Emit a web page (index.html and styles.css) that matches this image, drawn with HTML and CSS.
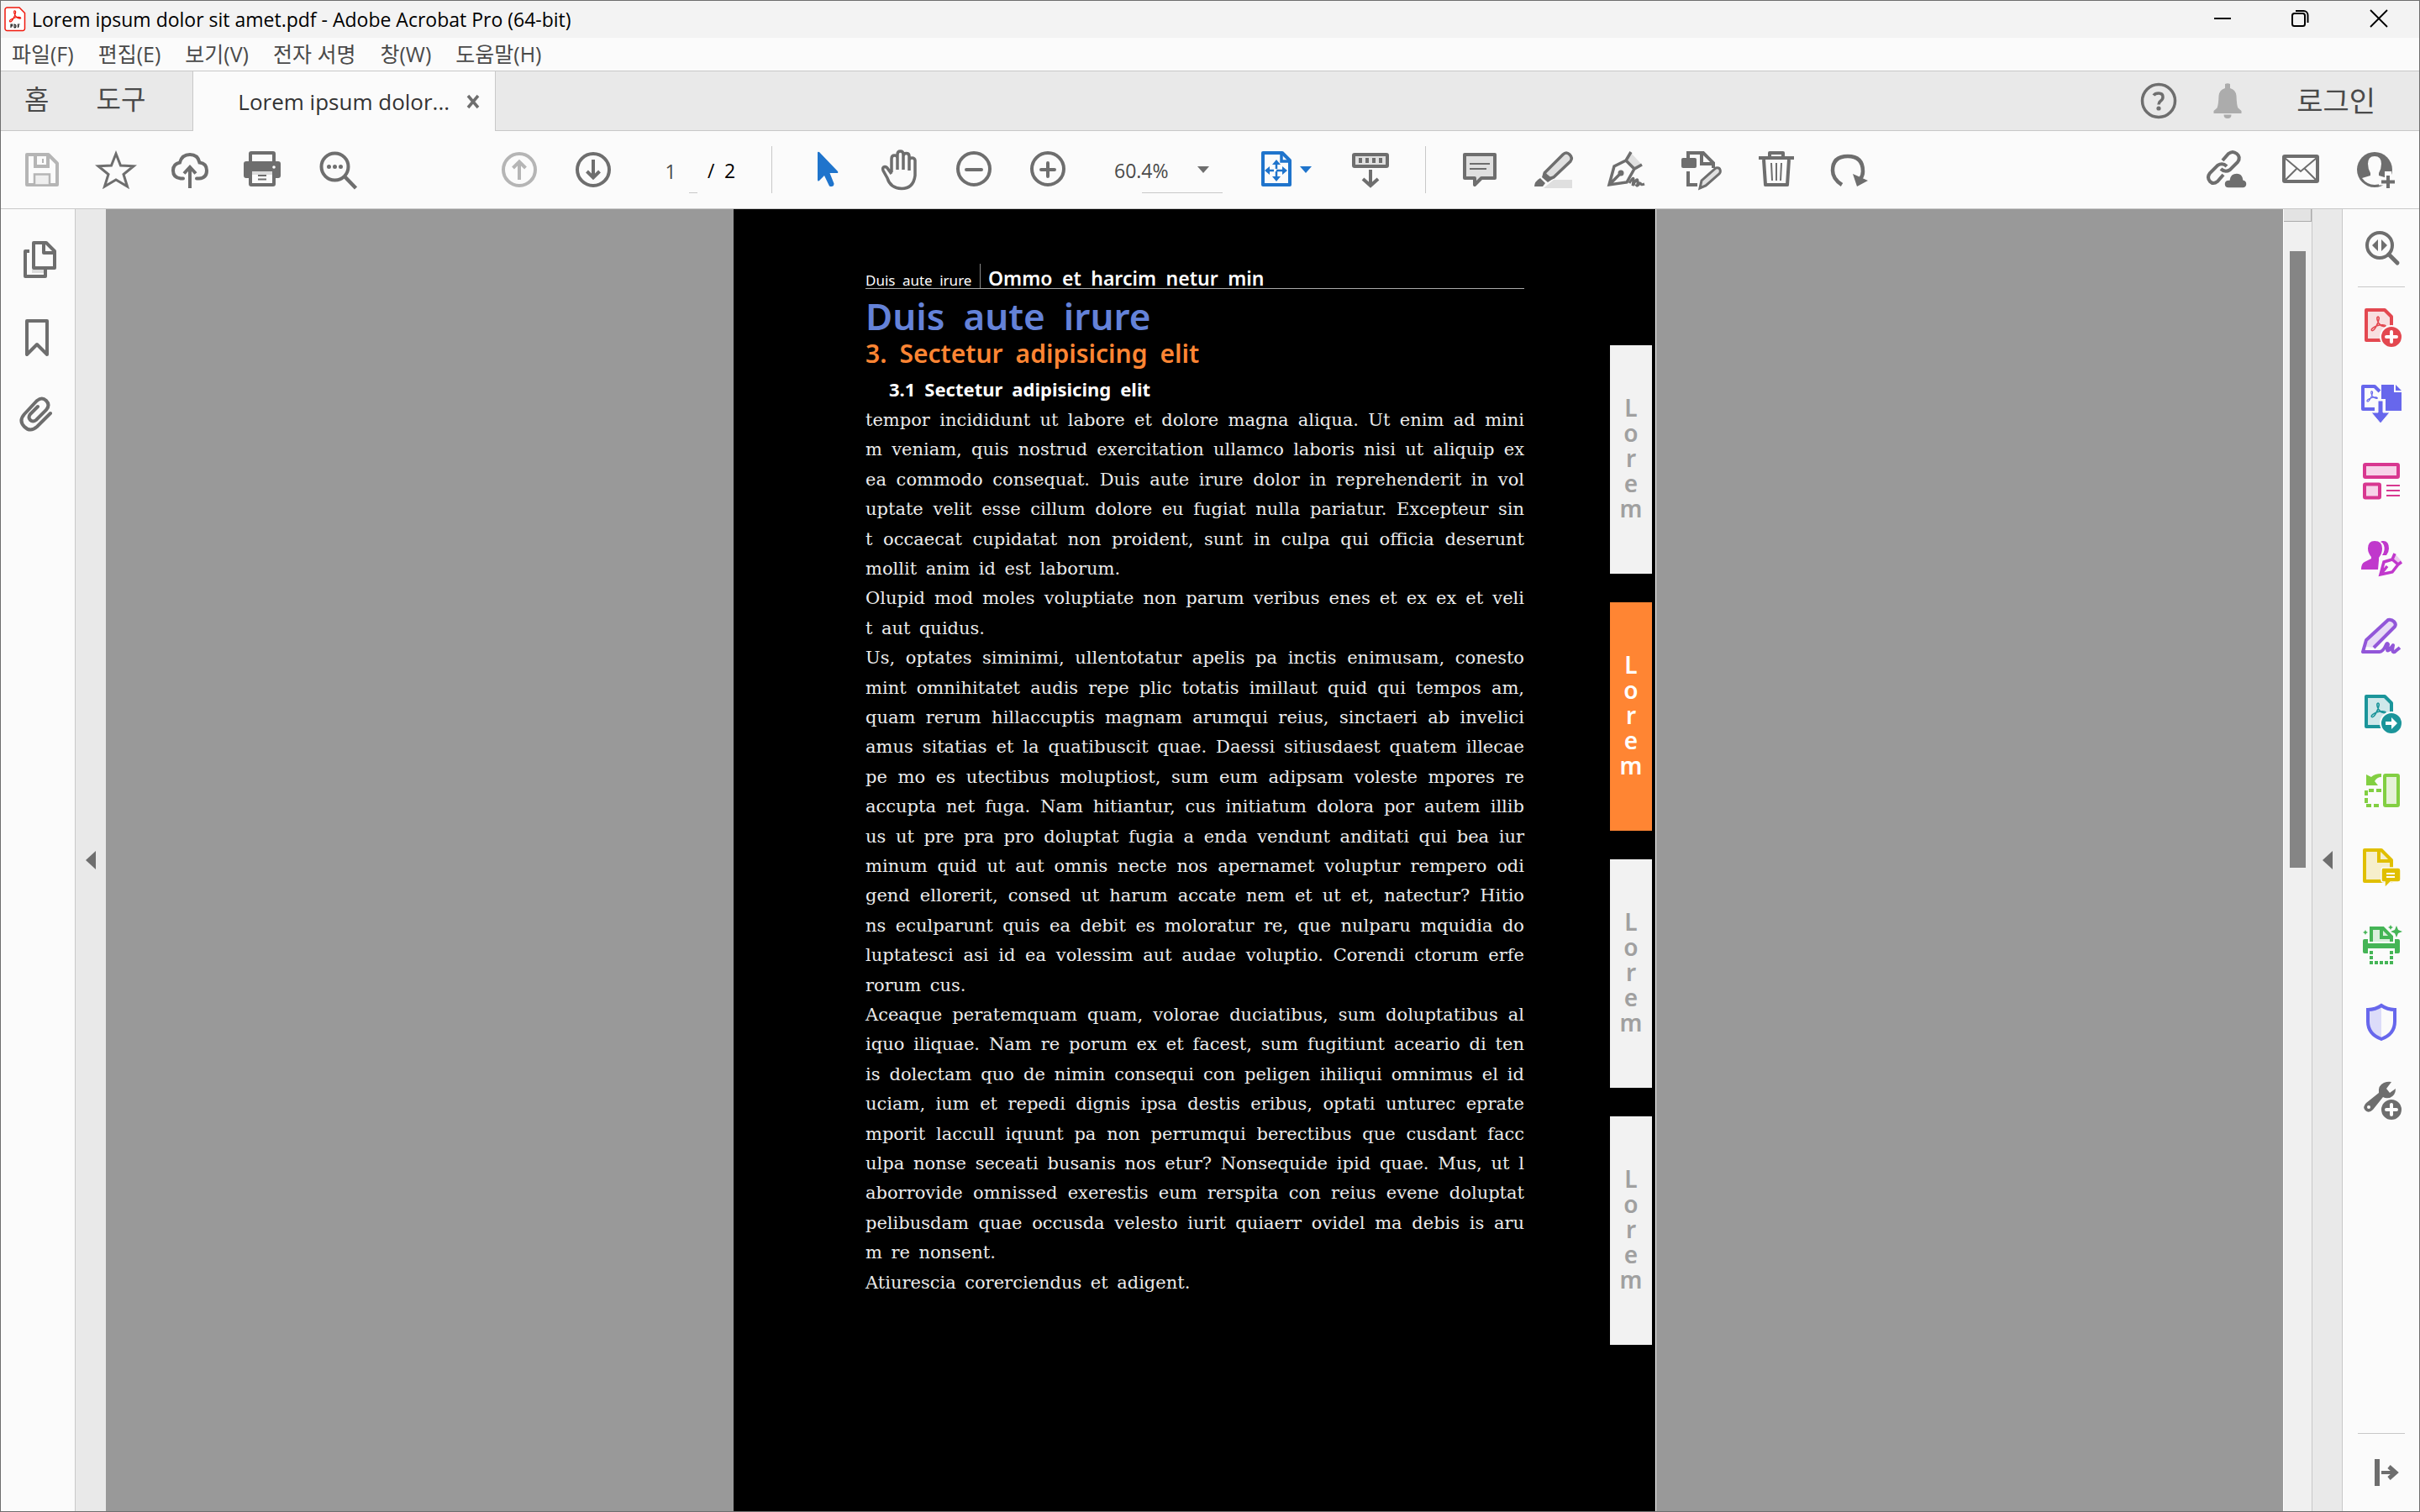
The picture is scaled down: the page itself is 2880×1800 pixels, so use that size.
FILE: index.html
```html
<!DOCTYPE html>
<html lang="ko">
<head>
<meta charset="utf-8">
<title>Lorem ipsum dolor sit amet.pdf - Adobe Acrobat Pro (64-bit)</title>
<link rel="stylesheet" href="styles.css">
</head>
<body>
<svg class="defs" aria-hidden="true">
  <symbol id="acrobat" viewBox="0 0 18 18"><path d="M1.5 16.5c-1.500-2 3-4 6-5.300 3.500-1.200 9-1.600 9.500 0 .4 1.800-4.500.6-6.500-1.600C8.500 7.600 7 3.500 7.600 1.800 8.200.4 10 1 9.700 3.200 9.200 7.500 4 18.500 1.500 16.500z" fill="none" stroke="currentColor" stroke-width="1.500"/></symbol>
</svg>
<div class="window">
  <header class="titlebar">
    <svg class="app-icon" viewBox="0 0 26 30" fill="none" stroke="#f0180c" stroke-width="1.500"><path d="M3 1h15l6.500 6.500V26a2.500 2.500 0 0 1-2.500 2.500H3.500A2.500 2.500 0 0 1 1 26V3.500A2.500 2.500 0 0 1 3.500 1z" fill="#fff"/><g color="#f0180c"><use href="#acrobat" x="5" y="4" width="16" height="15"/></g><path d="M8 25v-4h1.500v2H8m4 2v-4q2 0 2 2t-2 2m4.500 0v-4h2m-2 2h1.500" stroke="#222" stroke-width="1.200"/></svg>
    <h1 class="window-title">Lorem ipsum dolor sit amet.pdf - Adobe Acrobat Pro (64-bit)</h1>
    <div class="window-controls">
      <button aria-label="Minimize"><svg viewBox="0 0 22 22"><path d="M1 10h20" stroke="#000" stroke-width="2"/></svg></button>
      <button aria-label="Restore"><svg viewBox="0 0 22 22" fill="none" stroke="#000" stroke-width="2"><rect x="2" y="4" width="15" height="15" rx="2.500"/><path d="M6 1h9.500a5 5 0 0 1 5 5V15"/></svg></button>
      <button aria-label="Close"><svg viewBox="0 0 22 22"><path d="M1 0l20 20M21 0L1 20" stroke="#000" stroke-width="1.800"/></svg></button>
    </div>
  </header>
  <nav class="menubar">
    <button>파일(F)</button><button>편집(E)</button><button>보기(V)</button><button>전자 서명</button><button>창(W)</button><button>도움말(H)</button>
  </nav>
  <div class="tabbar">
    <button class="nav-tab">홈</button>
    <button class="nav-tab tools">도구</button>
    <div class="doc-tab"><span>Lorem ipsum dolor...</span>
      <button aria-label="Close tab"><svg viewBox="0 0 16 16"><path d="M2 1l12 14M14 1L2 15" stroke="#6e6e6e" stroke-width="3.500"/></svg></button>
    </div>
    <div class="account">
      <button aria-label="Help"><svg viewBox="0 0 48 48" fill="none" stroke="#6e6e6e"><circle cx="24" cy="24" r="19.500" stroke-width="3.500"/><path d="M18 17.500q1.500-2.500 6-2.500 5 0 5 4.500 0 3-3 5-2 1.500-2 4" stroke-width="3.500"/><circle cx="24" cy="33" r="2.600" fill="#6e6e6e" stroke="none"/></svg></button>
      <button aria-label="Notifications"><svg viewBox="0 0 48 48" fill="#acacac"><path d="M21 4q3-1.500 6 0v5q6.500 1.500 7.500 9 .4 12 2 14.500l4 3.500v3h-33v-3l4-3.500q1.600-3 2-14.500 1-7.500 7.500-9zM19.500 40.500h9q0 4.500-4.500 4.500t-4.500-4.500z"/></svg></button>
      <a class="login" href="#login">로그인</a>
    </div>
  </div>
  <div class="toolbar" role="toolbar">
    <div class="group files">
      <button aria-label="Save"><svg viewBox="0 0 48 48" fill="none" stroke="#b5b5b5" stroke-width="4"><path d="M6 6h25.500L42 16.500V42H6z" stroke-linejoin="round"/><path d="M16 6v14h15V6"/><path d="M25 11v5" stroke-width="2"/><rect x="15" y="29.500" width="18" height="13" fill="#efefef" stroke-width="2.500"/></svg></button>
      <button aria-label="Star"><svg viewBox="0 0 48 48" fill="none" stroke="#6e6e6e" stroke-width="3"><path d="M24 5l5.500 14L45 19.700 33 29.500 37.500 44 24 36 10.500 44 15 29.500 3 19.700 18.500 19z"/></svg></button>
      <button aria-label="Upload"><svg viewBox="0 0 48 48" fill="none" stroke="#6e6e6e" stroke-width="4"><path d="M16 34.500h-3q-9-1-9-9.500 0-8 8-9.500Q14.500 6 24 6t11.500 9.500q8.500 1 8.500 9.500 0 9-9 9.500h-3" stroke-linecap="round"/><path d="M24 46V23M17 28.500l7-7.500 7 7.500"/></svg></button>
      <button aria-label="Print"><svg viewBox="0 0 48 48"><path d="M9 2h26q3 0 3 3v9h3q3 0 3 3v14q0 3-3 3h-3v7q0 3-3 3H9q-3 0-3-3v-7H3q-3 0-3-3V17q0-3 3-3h3V5q0-3 3-3z" fill="#6e6e6e"/><path d="M10 6h24v8H10zM10 26h24v14H10z" fill="#fbfbfb"/><path d="M10 26h24v4H10z" fill="#dcdcdc"/><path d="M17 31h10M17 35.500h10" stroke="#6e6e6e" stroke-width="2"/><circle cx="36" cy="21" r="1.800" fill="#fff"/></svg></button>
      <button aria-label="Find"><svg viewBox="0 0 48 48" fill="none" stroke="#6e6e6e"><circle cx="20.500" cy="20.500" r="16" stroke-width="4"/><path d="M32 32l13.500 14" stroke-width="4.500"/><path d="M13.500 20.500h0M20.500 20.500h0M27.500 20.500h0" stroke-width="5" stroke-linecap="round"/></svg></button>
    </div>
    <div class="group pages">
      <button aria-label="Previous page"><svg viewBox="0 0 48 48" fill="none" stroke="#b5b5b5" stroke-width="4"><circle cx="24" cy="24" r="19"/><path d="M24 36V15M16.500 22l7.500-7.500 7.500 7.500"/></svg></button>
      <button aria-label="Next page"><svg viewBox="0 0 48 48" fill="none" stroke="#6e6e6e" stroke-width="4"><circle cx="24" cy="24" r="19"/><path d="M24 12v21M16.500 26l7.500 7.500 7.500-7.500"/></svg></button>
      <label class="page-field"><input value="1" aria-label="Page"><i></i></label>
      <span class="page-total">/&ensp;2</span>
    </div>
    <div class="group view">
      <button aria-label="Select"><svg viewBox="0 0 48 48"><path d="M14 4q0-2 2-1l22 23q1 2-1 2h-8.500l5 12.500q0 4-4 3.500-1.500 0-2-1.500L22 31l-6 6q-2 1.500-2-1z" fill="#1f74cc"/></svg></button>
      <button aria-label="Hand"><svg viewBox="0 0 48 48" fill="none" stroke="#6e6e6e" stroke-width="3.500"><path d="M14 27V11q0-4 3.500-4t3.500 3v14V6q0-4 3.500-4T28 6v18V8q0-3.500 3.500-3.500T35 8v17V13q0-3 3.300-3t3.700 3v18q-2 15.500-16 15.500-13.500-.5-17-12.500L4 25q-1.500-4 2-4.500 2.500 0 4 3l4 5.500"/></svg></button>
      <button aria-label="Zoom out"><svg viewBox="0 0 48 48" fill="none" stroke="#6e6e6e" stroke-width="4"><circle cx="24" cy="23" r="19"/><path d="M15 24h18" stroke-linecap="round"/></svg></button>
      <button aria-label="Zoom in"><svg viewBox="0 0 48 48" fill="none" stroke="#6e6e6e" stroke-width="4"><circle cx="24" cy="23" r="19"/><path d="M16 24h16M24 16v16" stroke-linecap="round"/></svg></button>
      <label class="zoom-field"><select aria-label="Zoom"><option>60.4%</option></select><svg viewBox="0 0 14 8"><path d="M0 0h14L7 8z" fill="#6e6e6e"/></svg></label>
      <button class="fit" aria-label="Fit page"><svg viewBox="0 0 48 48" fill="none" stroke="#1f74cc"><path d="M8 4h23l9 9v29H8z" stroke-width="4" stroke-linejoin="round"/><path d="M30 4v10h10" stroke-width="3.500"/><path d="M24 15v22M13 25h22" stroke-width="2.500" stroke-dasharray="8 3"/><path d="M24 12l5 6H19zM24 38l5-6H19zM10 25l6-5v10zM37 25l-6-5v10z" fill="#1f74cc" stroke="none"/></svg><svg class="caret" viewBox="0 0 14 8"><path d="M0 0h14L7 8z" fill="#1f74cc"/></svg></button>
      <button aria-label="Read mode"><svg viewBox="0 0 48 48" fill="none" stroke="#6e6e6e" stroke-width="4"><rect x="4" y="6" width="40" height="14" rx="1" fill="#e0e0e0"/><path d="M12 10v6M20 10v6M28 10v6M36 10v6M24 24v18M15 35l9 8 9-8"/></svg></button>
    </div>
    <div class="group comment">
      <button aria-label="Comment"><svg viewBox="0 0 48 48"><path d="M6 6h36v28H26l-8 8v-8H6z" fill="#e0e0e0" stroke="#6e6e6e" stroke-width="4" stroke-linejoin="round"/><path d="M12 17h24M12 23h20" stroke="#6e6e6e" stroke-width="2"/></svg></button>
      <button aria-label="Highlight"><svg viewBox="0 0 48 48"><path d="M12 46l12-10h22v10z" fill="#dfdfdf"/><path d="M14 27L35 6q4-4 8 0t1 8L24 33l-6 2-5-5z" fill="#e0e0e0" stroke="#6e6e6e" stroke-width="3.500"/><path d="M12 26l11 9-6 4-7-6zM8 34l6 6-3 4H1q0-6 7-10z" fill="#6e6e6e"/></svg></button>
      <button aria-label="Sign"><svg viewBox="0 0 48 48" fill="none" stroke="#6e6e6e" stroke-width="3.500"><path d="M27 3l14 15-7 5L23 12z" fill="#e0e0e0" stroke="none"/><path d="M28 3l-6 10 10 10 9-5M22 13L8 20 2 42l21-3 9-16M3 41l12-12" /><circle cx="16" cy="28" r="3.500" fill="#6e6e6e" stroke="none"/><path d="M26 40q5-8 5-5t-1 8q6-11 6-5t-1 5q2 0 4-4 0 4 5 2" stroke-width="3"/></svg></button>
      <button aria-label="Edit PDF"><svg viewBox="0 0 48 48" fill="none" stroke="#6e6e6e" stroke-width="4"><path d="M8 12V4h18l12 12v6M24 4v13h14M8 26v16h11"/><rect x="0" y="10" width="18" height="12" rx="2" fill="#6e6e6e" stroke="none"/><path d="M22 46l2-9 17-15q4-1 5 2t-1 5L29 43z" fill="#e0e0e0" stroke-width="3"/></svg></button>
      <button aria-label="Delete"><svg viewBox="0 0 48 48" fill="none" stroke="#6e6e6e" stroke-width="4"><path d="M4 10h42M17 9V4h16v5M10 12l2 30h26l2-30" stroke-linejoin="round"/><path d="M19 16l1 21M25 16v21M31 16l-1 21" stroke-width="2"/></svg></button>
      <button aria-label="Rotate"><svg viewBox="0 0 48 48"><path d="M15 42Q4 35 4 25 4 8 22 8t18 18q0 5-3 9" fill="none" stroke="#6e6e6e" stroke-width="4.500"/><path d="M28 29l18 8-13 7z" fill="#6e6e6e"/></svg></button>
    </div>
    <div class="group share">
      <button aria-label="Share link"><svg viewBox="0 0 48 48" fill="none" stroke="#6e6e6e" stroke-width="4"><path d="M19 13l7-8q5-4 10 0t1 10l-9 9q-6 4-11-1M20 30l-7 8q-5 4-9 0-4-5 0-10l9-9q6-4 11 1" /><path d="M26 46q-5 0-5-5t6-5q1-8 9-8 7 0 8 8 4 1 4 5t-4 5z" fill="#6e6e6e" stroke="#fbfbfb" stroke-width="1.500"/></svg></button>
      <button aria-label="Email"><svg viewBox="0 0 48 48" fill="none" stroke="#6e6e6e"><rect x="4" y="8" width="40" height="30" rx="1" stroke-width="4"/><path d="M5 10l19 16L43 10M5 37l14-14M43 37L29 23" stroke-width="2"/></svg></button>
      <button aria-label="Add person"><svg viewBox="0 0 48 48"><circle cx="24" cy="24" r="21" fill="#6e6e6e"/><path d="M24 8q8 0 8 9 0 6-3 11v3l10 3q-6 8-15 8T9 34l10-3v-3q-3-5-3-11 0-9 8-9z" fill="#fbfbfb"/><path d="M40 26v22M29 38.500h19" stroke="#fbfbfb" stroke-width="8"/><path d="M40 31v15M32 38.500h16" stroke="#6e6e6e" stroke-width="4"/></svg></button>
    </div>
  </div>
  <main class="workspace">
    <nav class="left-panel">
      <button aria-label="Thumbnails"><svg viewBox="0 0 48 48" fill="none" stroke="#6e6e6e" stroke-width="4"><path d="M17 38h14" stroke="#dcdcdc"/><path d="M14 14H9v30h24v-9M19 4h15l10 10v20H19zM31 4v12h13" stroke-linejoin="round"/></svg></button>
      <button aria-label="Bookmarks"><svg viewBox="0 0 48 48" fill="none" stroke="#6e6e6e" stroke-width="4"><path d="M11 5h24v40L23 33 11 45z" stroke-linejoin="round"/></svg></button>
      <button aria-label="Attachments"><svg viewBox="0 0 48 48" fill="none" stroke="#6e6e6e" stroke-width="4" stroke-linecap="round"><path d="M39 23L23 39q-8 7-15 0t0-15L23 8q6-5 11 0t0 11L22 31q-4 3-7 0t0-7l9-9"/></svg></button>
    </nav>
    <button class="collapse" aria-label="Show left panel"><svg viewBox="0 0 12 22"><path d="M12 0v22L0 11z" fill="#6e6e6e"/></svg></button>
    <section class="canvas">
      <article class="page">
        <div class="sheet">
          <div class="running-head"><span class="chapter">Duis&ensp;aute&ensp;irure</span><strong>Ommo&ensp;et&ensp;harcim&ensp;netur&ensp;min</strong></div>
          <h2>Duis&ensp;aute&ensp;irure</h2>
          <h3>3.&ensp;Sectetur&ensp;adipisicing&ensp;elit</h3>
          <h4>3.1&ensp;Sectetur&ensp;adipisicing&ensp;elit</h4>
          <div class="copy">
            <p><span>tempor incididunt ut labore et dolore magna aliqua. Ut enim ad mini</span><span>m veniam, quis nostrud exercitation ullamco laboris nisi ut aliquip ex</span><span>ea commodo consequat. Duis aute irure dolor in reprehenderit in vol</span><span>uptate velit esse cillum dolore eu fugiat nulla pariatur. Excepteur sin</span><span>t occaecat cupidatat non proident, sunt in culpa qui officia deserunt</span><span class="last">mollit&ensp;anim&ensp;id&ensp;est&ensp;laborum.</span></p>
            <p><span>Olupid mod moles voluptiate non parum veribus enes et ex ex et veli</span><span class="last">t&ensp;aut&ensp;quidus.</span></p>
            <p><span>Us, optates siminimi, ullentotatur apelis pa inctis enimusam, conesto</span><span>mint omnihitatet audis repe plic totatis imillaut quid qui tempos am,</span><span>quam rerum hillaccuptis magnam arumqui reius, sinctaeri ab invelici</span><span>amus sitatias et la quatibuscit quae. Daessi sitiusdaest quatem illecae</span><span>pe mo es utectibus moluptiost, sum eum adipsam voleste mpores re</span><span>accupta net fuga. Nam hitiantur, cus initiatum dolora por autem illib</span><span>us ut pre pra pro doluptat fugia a enda vendunt anditati qui bea iur</span><span>minum quid ut aut omnis necte nos apernamet voluptur rempero odi</span><span>gend ellorerit, consed ut harum accate nem et ut et, natectur? Hitio</span><span>ns eculparunt quis ea debit es moloratur re, que nulparu mquidia do</span><span>luptatesci asi id ea volessim aut audae voluptio. Corendi ctorum erfe</span><span class="last">rorum&ensp;cus.</span></p>
            <p><span>Aceaque peratemquam quam, volorae duciatibus, sum doluptatibus al</span><span>iquo iliquae. Nam re porum ex et facest, sum fugitiunt aceario di ten</span><span>is dolectam quo de nimin consequi con peligen ihiliqui omnimus el id</span><span>uciam, ium et repedi dignis ipsa destis eribus, optati unturec eprate</span><span>mporit laccull iquunt pa non perrumqui berectibus que cusdant facc</span><span>ulpa nonse seceati busanis nos etur? Nonsequide ipid quae. Mus, ut l</span><span>aborrovide omnissed exerestis eum rerspita con reius evene doluptat</span><span>pelibusdam quae occusda velesto iurit quiaerr ovidel ma debis is aru</span><span class="last">m&ensp;re&ensp;nonsent.</span></p>
            <p><span class="last">Atiurescia&ensp;corerciendus&ensp;et&ensp;adigent.</span></p>
          </div>
        </div>
        <nav class="thumb-index"><a href="#s1"><span>Lorem</span></a><a class="current" href="#s2"><span>Lorem</span></a><a href="#s3"><span>Lorem</span></a><a href="#s4"><span>Lorem</span></a></nav>
      </article>
    </section>
    <div class="scrollbar"><div class="split"></div><div class="thumb"></div></div>
    <button class="collapse right" aria-label="Hide tools panel"><svg viewBox="0 0 12 22"><path d="M12 0v22L0 11z" fill="#6e6e6e"/></svg></button>
    <nav class="tools-panel">
      <button aria-label="Search tools"><svg viewBox="0 0 48 48"><circle cx="22" cy="21" r="15" fill="none" stroke="#6e6e6e" stroke-width="4"/><path d="M33 32l10 10" stroke="#6e6e6e" stroke-width="5" stroke-linecap="round"/><path d="M20 14v14l-7-7zM24 14v14l7-7z" fill="#6e6e6e"/></svg></button>
      <hr>
      <button aria-label="Create PDF"><svg viewBox="0 0 48 48" color="#e34850"><path d="M6 4h22l8 8v28H6z" fill="#f8dfe0" stroke="#e34850" stroke-width="4" stroke-linejoin="round"/><use href="#acrobat" x="11" y="11" width="19" height="19"/><circle cx="36" cy="36" r="13" fill="#e34850" stroke="#fbfbfb" stroke-width="2"/><path d="M36 30v12M30 36h12" stroke="#fff" stroke-width="4" stroke-linecap="round"/></svg></button>
      <button aria-label="Export PDF"><svg viewBox="0 0 48 48" color="#6767ec"><path d="M24 1h15v9h9v22H29V18h-5zM41 1l7 7h-7z" fill="#6767ec"/><path d="M16 30H2V3h14l6 6" fill="none" stroke="#6767ec" stroke-width="4" stroke-linejoin="round"/><use href="#acrobat" x="6" y="8" width="14" height="14"/><path d="M20 20h6v14h8L23 47 12 34h8z" fill="#6767ec" stroke="#fbfbfb" stroke-width="1"/></svg></button>
      <button aria-label="Organize pages"><svg viewBox="0 0 48 48" fill="#f7d3e9" stroke="#d83790"><g stroke-width="4"><rect x="4" y="4" width="40" height="15" rx="1"/><rect x="4" y="27.500" width="18" height="16" rx="1"/></g><path d="M30 29h16M30 35h16M30 41h16" stroke-width="2"/></svg></button>
      <button aria-label="Request signatures"><svg viewBox="0 0 48 48" fill="#c038cc"><path d="M16 3q9 0 9 9 0 6-4 11v3l-1 11H0q0-7 4-9l8-4v-2q-4-5-4-10Q8 3 16 3zM25 3q8-1 8 9 0 4-3 8h-5q4-6 2-12-1-3-4-4z"/><path d="M40 18l-3 7-10 3-4 15 14-3 7-9 4-3M37 25l7 6M23 43l8-10" fill="none" stroke="#c038cc" stroke-width="3.500"/><path d="M40 18l8 9-4 3-7-6z" opacity=".25"/></svg></button>
      <button aria-label="Fill and sign"><svg viewBox="0 0 48 48" fill="none" stroke="#9256d9" stroke-width="4"><path d="M6 29L31 5q3-3 7 1t1 7L15 38l-9-1z" fill="#e8dcf6" stroke="none"/><path d="M15 38l25-25q2-3-1-6t-7-2L6 29 2 43h20q4 0 8-9 1-2 2 0l-1 6q0 3 3 0l4-5-1 6q1 4 4 1l5-4" stroke-linejoin="round"/></svg></button>
      <button aria-label="Share PDF"><svg viewBox="0 0 48 48" color="#1b959a"><path d="M6 4h22l8 8v28H6z" fill="#cfe8ea" stroke="#1b959a" stroke-width="4" stroke-linejoin="round"/><use href="#acrobat" x="11" y="11" width="19" height="19"/><circle cx="36" cy="36" r="13" fill="#1b959a" stroke="#fbfbfb" stroke-width="2"/><path d="M29 34h7v-5l7 7-7 7v-5h-7z" fill="#fff"/></svg></button>
      <button aria-label="Reorder"><svg viewBox="0 0 48 48" fill="none" stroke="#82cf42"><rect x="28" y="6" width="16" height="36" rx="1" fill="#e5f2d8" stroke-width="4"/><path d="M24 24H6v18h18" stroke-width="4" stroke-dasharray="6 3"/><path d="M24 4q-8 0-12 4L6 5v13h14l-4-5q3-5 8-5z" fill="#82cf42" stroke="none"/></svg></button>
      <button aria-label="Comment"><svg viewBox="0 0 48 48"><path d="M4 3h20l12 12v25H4z" fill="#f6efcb" stroke="#e0bf00" stroke-width="4" stroke-linejoin="round"/><path d="M21 3v13h15" fill="none" stroke="#e0bf00" stroke-width="4"/><path d="M26 24h18q3 0 3 3v11q0 3-3 3h-9l-7 7v-7h-2q-2 0-2-3V27q0-3 2-3z" fill="#e0bf00" stroke="#fbfbfb" stroke-width="1.500"/><path d="M30 31h10M30 35h10" stroke="#fff" stroke-width="2"/></svg></button>
      <button aria-label="Scan and OCR"><svg viewBox="0 0 48 48" fill="#45b556"><path d="M12 22V4h14l10 10v8z" fill="#daefdd" stroke="#45b556" stroke-width="4"/><path d="M24 4v11h12" fill="none" stroke="#45b556" stroke-width="4"/><path d="M8 20h32v10H8z" fill="#fbfbfb"/><path d="M4 17h4v5h32v-5h4q2 0 2 2v13q0 2-2 2h-4v-6H8v6H4q-2 0-2-2V19q0-2 2-2z"/><path d="M12 31v14h24V31" fill="none" stroke="#45b556" stroke-width="4" stroke-dasharray="4 2"/><path d="M42 1l2 5 5 2-5 2-2 5-2-5-5-2 5-2zM5 6l1 2 2 1-2 1-1 2-1-2-2-1 2-1zM35 0l1 2 2 1-2 1-1 2-1-2-2-1 2-1z"/></svg></button>
      <button aria-label="Protect"><svg viewBox="0 0 48 48"><path d="M24 4L8 9v14q0 15 16 21z" fill="#dcdcf9"/><path d="M24 4q-7 5-16 5v14q0 15 16 21 16-6 16-21V9q-9 0-16-5z" fill="none" stroke="#6767ec" stroke-width="4"/></svg></button>
      <button aria-label="More tools"><svg viewBox="0 0 48 48"><path d="M36 3l-6 8 4 5 7-5q0 8-7 11-5 1-8-1L14 36q-5 5-9 1t1-9l15-12q-1-9 6-12 5-2 9-1z" fill="#6e6e6e"/><circle cx="9" cy="33" r="2" fill="#fff"/><circle cx="36" cy="36" r="13" fill="#6e6e6e" stroke="#fbfbfb" stroke-width="2"/><path d="M36 30v12M30 36h12" stroke="#fff" stroke-width="4" stroke-linecap="round"/></svg></button>
      <hr class="bottom">
      <button aria-label="Expand panel"><svg viewBox="0 0 48 48" stroke="#6e6e6e" fill="none"><path d="M19 8v32" stroke-width="6"/><path d="M24 24h17" stroke-width="4"/><path d="M33 17l8 7-8 7" stroke-width="5"/></svg></button>
    </nav>
  </main>
</div>
</body>
</html>
```
FILE: styles.css
```css
* { box-sizing: border-box; }
body { margin: 0; font-family: "Open Sans", "Noto Sans CJK KR", sans-serif; color: #4a4a4a; }
button { margin: 0; padding: 0; border: 0; background: none; font: inherit; color: inherit; display: flex; align-items: center; justify-content: center; white-space: nowrap; }
svg { display: block; flex: none; overflow: visible; }
.defs { position: absolute; width: 0; height: 0; }
.window { min-height: 100vh; display: flex; flex-direction: column; border: 1px solid #6e6e6e; background: #fbfbfb; }

.titlebar { height: 44px; background: #f3f3f3; display: flex; align-items: center; gap: 7px; padding-left: 4px; }
.app-icon { width: 26px; height: 30px; }
.window-title { margin: 0; font-size: 23px; font-weight: 400; line-height: 32px; color: #000; flex: 1; }
.window-controls { display: flex; align-self: stretch; }
.window-controls button { width: 92px; }
.window-controls button:last-child { width: 96px; }
.window-controls svg { width: 22px; height: 22px; }

.menubar { height: 40px; display: flex; gap: 29px; padding: 0 0 2px 13px; border-bottom: 1px solid #c8c8c8; font-size: 25px; line-height: 32px; }

.tabbar { height: 71px; display: flex; background: #e9e9e9; }
.tabbar > * { border-bottom: 1px solid #c8c8c8; }
.nav-tab { font-size: 32px; line-height: 40px; padding: 0 27px 4px 28px; }
.nav-tab.tools { padding: 0 56px 4px 29px; }
.doc-tab { width: 361px; display: flex; align-items: center; gap: 20px; padding-left: 53px; font-size: 26px; color: #333; background: #fbfbfb; border: 1px solid #c8c8c8; border-width: 0 1px; white-space: nowrap; }
.doc-tab svg { width: 16px; height: 16px; }
.account { flex: 1; display: flex; justify-content: flex-end; align-items: center; gap: 34px; padding-right: 52px; }
.account svg { width: 48px; height: 48px; }
.login { margin-left: 24px; color: inherit; text-decoration: none; font-size: 34px; line-height: 48px; }

.toolbar { height: 93px; display: flex; align-items: center; border-bottom: 1px solid #c8c8c8; }
.group { display: flex; align-items: center; }
.group > button { width: 88px; height: 72px; }
.group svg { width: 48px; height: 48px; }
.files { padding-left: 5px; }
.pages { margin-left: 128px; font-size: 23px; }
.page-field { width: 80px; height: 56px; display: flex; flex-direction: column; align-items: flex-end; }
.page-field input { width: 100%; height: 55px; padding: 4px 16px 0 32px; border: 0; background: none; font: inherit; color: #4a4a4a; text-align: center; }
.page-field i { width: 10px; height: 1px; background: #c8c8c8; }
.page-total { width: 88px; padding: 2px 0 0 12px; color: #000; }
.view { border-left: 1px solid #c8c8c8; height: 56px; padding-left: 20px; }
.zoom-field { width: 164px; height: 56px; margin-right: 20px; display: flex; align-items: center; position: relative; }
.zoom-field::after { content: ""; position: absolute; left: 68px; right: 0; bottom: 0; height: 1px; background: #c8c8c8; }
.zoom-field select { width: 100%; height: 52px; padding: 2px 35px 0; appearance: none; border: 0; background: none; font: inherit; font-size: 23px; color: #4a4a4a; }
.zoom-field svg { position: absolute; right: 16px; width: 14px; height: 8px; pointer-events: none; }
.view > .fit { width: 112px; justify-content: flex-start; padding-left: 20px; gap: 4px; }
.fit .caret { width: 14px; height: 8px; }
.comment { margin-left: 21px; border-left: 1px solid #c8c8c8; height: 56px; padding-left: 20px; }
.share { margin-left: auto; padding-right: 9px; }

.workspace { flex: 1; display: flex; }
.workspace svg { width: 48px; height: 48px; }
.left-panel { width: 89px; padding-top: 14px; border-right: 1px solid #c8c8c8; }
.left-panel button { width: 88px; height: 92px; }
.workspace .collapse { width: 36px; background: #e9e9e9; }
.collapse.right { border-left: 1px solid #c8c8c8; }
.workspace .collapse svg { width: 12px; height: 22px; }
.canvas { flex: 1; display: flex; justify-content: center; background: #999; }
.page { width: 1098px; margin-left: 1px; display: flex; background: #000; border-right: 1px solid #fff; color: #ececec; font-family: "Noto Sans", sans-serif; }
.sheet { width: 784px; margin-left: 157px; padding-top: 65px; }
.running-head { height: 30px; display: flex; align-items: flex-end; border-bottom: 1px solid #aaa; color: #fff; }
.chapter { width: 137px; height: 29px; padding-top: 11px; border-right: 1px solid #888; font-size: 17px; line-height: 18px; }
.running-head strong { padding-left: 9px; font-size: 23px; font-weight: 600; line-height: 24px; }
.sheet h2 { margin: 3px 0 0; font-size: 44px; line-height: 58px; font-weight: 600; color: #6482d8; }
.sheet h3 { margin: 0; font-size: 30px; line-height: 32px; font-weight: 600; color: #ff8533; }
.sheet h4 { margin: 10px 0 0; padding-left: 28px; font-size: 22px; line-height: 32px; font-weight: 700; color: #fff; }
.copy { display: grid; grid-auto-rows: 1fr; min-height: 1062px; padding-top: 4px; box-sizing: content-box; font: 21px/35px "DejaVu Serif", serif; }
.copy p { display: contents; }
.copy span { text-align-last: justify; white-space: nowrap; }
.copy .last { text-align-last: left; }
.thumb-index { width: 50px; margin-left: 102px; padding-top: 162px; display: flex; flex-direction: column; gap: 34px; }
.thumb-index a { height: 272px; display: flex; align-items: center; justify-content: center; background: #f2f2f2; color: #a0a0a0; text-decoration: none; font-size: 28px; line-height: 30px; font-weight: 600; text-align: center; }
.thumb-index .current { background: #ff8533; color: #fff; }
.thumb-index span { width: 27px; padding-bottom: 4px; word-break: break-all; }

.scrollbar { width: 34px; display: flex; flex-direction: column; align-items: center; background: #f0f0f0; border-left: 1px solid #fff; }
.split { width: 100%; height: 15px; background: #e3e3e3; border: 1px solid #aaa; border-width: 0 1px 1px 0; }
.thumb { width: 19px; height: 734px; margin-top: 35px; background: #858585; }
.tools-panel { width: 92px; border-left: 1px solid #c8c8c8; display: flex; flex-direction: column; align-items: center; }
.tools-panel button { width: 91px; height: 92px; }
.tools-panel hr { width: 56px; height: 2px; margin: 0; border: 0; border-top: 1px solid #c8c8c8; }
.tools-panel .bottom { margin-top: auto; height: 1px; }
```
